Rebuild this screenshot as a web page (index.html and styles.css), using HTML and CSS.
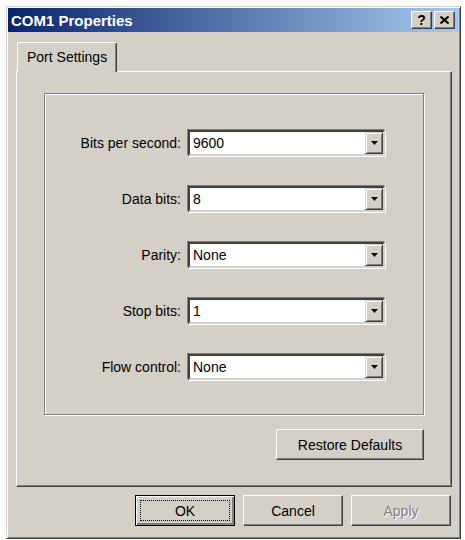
FILE: index.html
```html
<!DOCTYPE html>
<html lang="en">
<head>
  <meta charset="UTF-8">
  <title>COM1 Properties</title>
  <link rel="stylesheet" href="styles.css">
</head>
<body>
  <div class="window">
    <div class="titlebar">
      <span class="title">COM1 Properties</span>
      <div class="title-buttons">
        <div class="tbtn help">?</div>
        <div class="tbtn close">
          <svg width="9" height="8" viewBox="0 0 9 8">
            <path d="M0.5 0.5 L8.5 7.5 M8.5 0.5 L0.5 7.5" stroke="#000" stroke-width="2"/>
          </svg>
        </div>
      </div>
    </div>

    <div class="body">
      <div class="tabs">
        <div class="tab">Port Settings</div>
      </div>

      <div class="panel">
        <div class="group">
          <div class="fields">
            <label>Bits per second:</label>
            <div class="combo"><span class="value">9600</span><div class="drop"><svg width="7" height="4" viewBox="0 0 7 4"><path d="M0 0 H7 L3.5 4 Z" fill="#000"/></svg></div></div>

            <label>Data bits:</label>
            <div class="combo"><span class="value">8</span><div class="drop"><svg width="7" height="4" viewBox="0 0 7 4"><path d="M0 0 H7 L3.5 4 Z" fill="#000"/></svg></div></div>

            <label>Parity:</label>
            <div class="combo"><span class="value">None</span><div class="drop"><svg width="7" height="4" viewBox="0 0 7 4"><path d="M0 0 H7 L3.5 4 Z" fill="#000"/></svg></div></div>

            <label>Stop bits:</label>
            <div class="combo"><span class="value">1</span><div class="drop"><svg width="7" height="4" viewBox="0 0 7 4"><path d="M0 0 H7 L3.5 4 Z" fill="#000"/></svg></div></div>

            <label>Flow control:</label>
            <div class="combo"><span class="value">None</span><div class="drop"><svg width="7" height="4" viewBox="0 0 7 4"><path d="M0 0 H7 L3.5 4 Z" fill="#000"/></svg></div></div>
          </div>
        </div>

        <div class="restore-row">
          <button class="btn restore">Restore Defaults</button>
        </div>
      </div>

      <div class="actions">
        <button class="btn ok"><span class="focus">OK</span></button>
        <button class="btn">Cancel</button>
        <button class="btn" disabled>Apply</button>
      </div>
    </div>
  </div>
</body>
</html>
```

FILE: styles.css
```css
* {
  box-sizing: border-box;
}
body, html {
  margin: 0;
  padding: 0;
  background: #fff;
  font-family: "Liberation Sans", Arial, sans-serif;
  font-size: 14px;
}

/* window frame */
.window {
  margin: 6px 0 0 6px;
  width: 455px;
  height: 533px;
  padding: 1px;
  background: #d4d0c8;
  border: 1px solid;
  border-color: #d4d0c8 #404040 #404040 #d4d0c8;
  box-shadow: inset 1px 1px #fff, inset -1px -1px #808080;
}

.titlebar {
  height: 24px;
  display: flex;
  align-items: center;
  justify-content: space-between;
  padding: 0 4px 0 3px;
  background: linear-gradient(to right, #0a246a, #a6caf0);
}
.title {
  color: #fff;
  font-weight: bold;
  font-size: 15px;
}
.title-buttons {
  display: flex;
  gap: 2px;
}
.tbtn {
  width: 21px;
  height: 18px;
  display: flex;
  align-items: center;
  justify-content: center;
  background: #d4d0c8;
  border: 1px solid;
  border-color: #fff #404040 #404040 #fff;
  box-shadow: inset -1px -1px #808080;
  font-weight: bold;
  font-size: 14px;
  color: #000;
}

.body {
  padding: 10px 7px 0 8px;
}

/* tab strip */
.tabs {
  display: flex;
  position: relative;
  z-index: 1;
  margin-bottom: -1px;
}
.tab {
  margin-left: 1px;
  width: 100px;
  height: 30px;
  padding-left: 9px;
  line-height: 28px;
  background: #d4d0c8;
  border: 1px solid;
  border-bottom: none;
  border-color: #fff #404040 #d4d0c8 #fff;
  border-radius: 2px 2px 0 0;
  box-shadow: inset -1px 0 #808080;
}

.panel {
  height: 416px;
  padding: 21px 27px 0 27px;
  border: 1px solid;
  border-color: #fff #404040 #404040 #fff;
  box-shadow: inset -1px -1px #808080;
}

/* etched group box */
.group {
  height: 322px;
  padding-top: 36px;
  border: 1px solid #808080;
  box-shadow: inset 1px 1px #fff, 1px 1px #fff;
}

.fields {
  display: grid;
  grid-template-columns: 136px 197px;
  grid-auto-rows: 26px;
  column-gap: 7px;
  row-gap: 30px;
  align-items: center;
}
.fields label {
  text-align: right;
}

.combo {
  height: 26px;
  display: flex;
  background: #fff;
  border: 2px solid;
  border-color: #404040 #d4d0c8 #d4d0c8 #404040;
  box-shadow: -1px -1px #808080, 1px 1px #fff;
}
.combo .value {
  flex: 1;
  padding-left: 3px;
  line-height: 22px;
}
.drop {
  width: 18px;
  display: flex;
  align-items: center;
  justify-content: center;
  background: #d4d0c8;
  border: 1px solid;
  border-color: #d4d0c8 #404040 #404040 #d4d0c8;
  box-shadow: inset 1px 1px #fff, inset -1px -1px #808080;
}

.restore-row {
  display: flex;
  justify-content: flex-end;
  margin-top: 14px;
}

.btn {
  height: 31px;
  width: 100px;
  padding: 0;
  font-family: "Liberation Sans", Arial, sans-serif;
  font-size: 14px;
  color: #000;
  background: #d4d0c8;
  border: 1px solid;
  border-color: #fff #404040 #404040 #fff;
  box-shadow: inset -1px -1px #808080;
}
.btn.restore {
  width: 148px;
}
.btn:disabled {
  color: #808080;
  text-shadow: 1px 1px #fff;
}
.btn.ok {
  border: 1px solid #000;
  box-shadow: inset 1px 1px #fff, inset -2px -2px #808080, inset -1px -1px #404040;
  padding: 4px;
}
.btn.ok .focus {
  display: flex;
  align-items: center;
  justify-content: center;
  height: 100%;
  border: 1px dotted #000;
}

.actions {
  display: flex;
  justify-content: flex-end;
  gap: 8px;
  margin-top: 8px;
  padding-right: 1px;
}
```
